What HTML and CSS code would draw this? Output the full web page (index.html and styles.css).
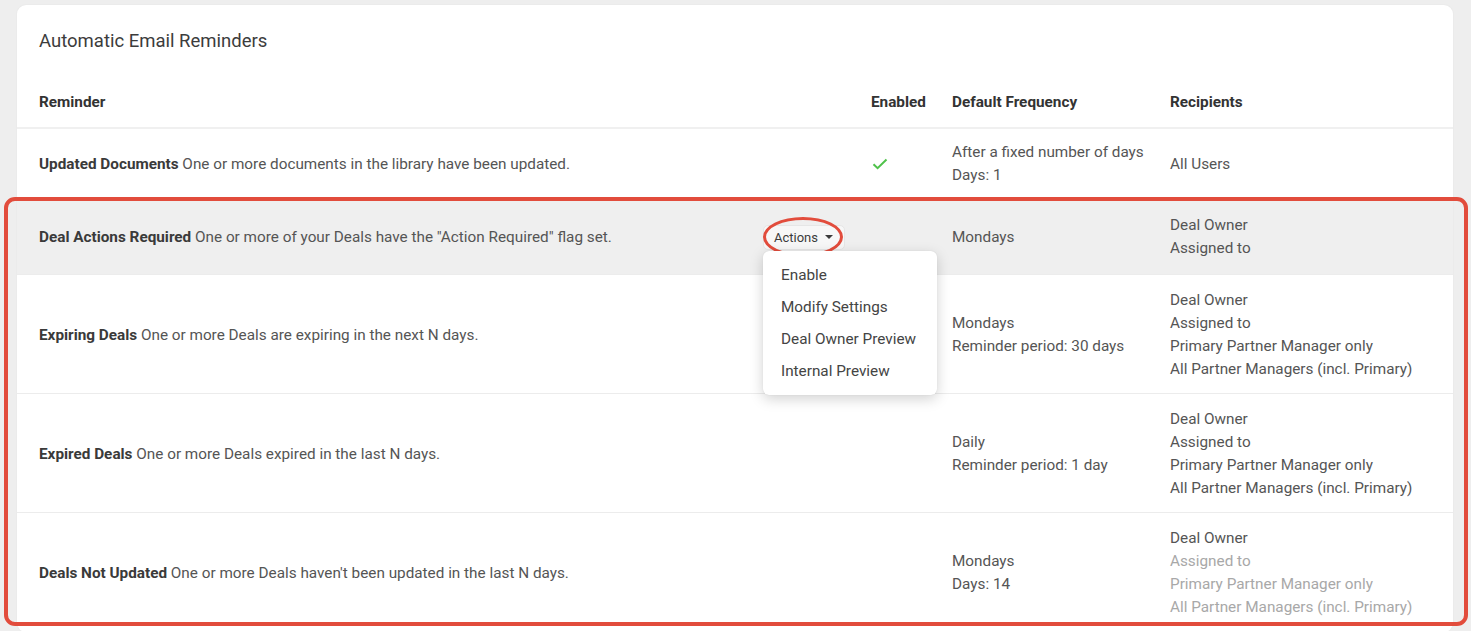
FILE: index.html
```html
<!DOCTYPE html>
<html lang="en">
<head>
<meta charset="utf-8">
<title>Automatic Email Reminders</title>
<link rel="stylesheet" href="styles.css">
</head>
<body>
<div class="page">
  <section class="card">
    <h2 class="card-title">Automatic Email Reminders</h2>
    <div class="grid head">
      <div class="cell c-rem">Reminder</div>
      <div class="cell c-en">Enabled</div>
      <div class="cell c-freq">Default Frequency</div>
      <div class="cell c-rec">Recipients</div>
    </div>

    <div class="grid row row-short">
      <div class="cell c-rem"><span><b>Updated Documents</b> One or more documents in the library have been updated.</span></div>
      <div class="cell c-en">
        <svg class="check" width="16" height="12" viewBox="0 0 16 12"><path d="M1.5 6.2 L5.6 10.2 L14.5 1.5" fill="none" stroke="#4fc24a" stroke-width="2"/></svg>
      </div>
      <div class="cell c-freq"><div>After a fixed number of days</div><div>Days: 1</div></div>
      <div class="cell c-rec"><div>All Users</div></div>
    </div>

    <div class="grid row row-hover">
      <div class="cell c-rem split">
        <span><b>Deal Actions Required</b> One or more of your Deals have the "Action Required" flag set.</span>
        <div class="actions">
          <button class="btn-actions">Actions <span class="caret"></span></button>
          <span class="ring"></span>
          <ul class="menu">
            <li>Enable</li>
            <li>Modify Settings</li>
            <li>Deal Owner Preview</li>
            <li>Internal Preview</li>
          </ul>
        </div>
      </div>
      <div class="cell c-en"></div>
      <div class="cell c-freq"><div>Mondays</div></div>
      <div class="cell c-rec"><div>Deal Owner</div><div>Assigned to</div></div>
    </div>

    <div class="grid row row-tall">
      <div class="cell c-rem"><span><b>Expiring Deals</b> One or more Deals are expiring in the next N days.</span></div>
      <div class="cell c-en"></div>
      <div class="cell c-freq"><div>Mondays</div><div>Reminder period: 30 days</div></div>
      <div class="cell c-rec"><div>Deal Owner</div><div>Assigned to</div><div>Primary Partner Manager only</div><div>All Partner Managers (incl. Primary)</div></div>
    </div>

    <div class="grid row row-tall">
      <div class="cell c-rem"><span><b>Expired Deals</b> One or more Deals expired in the last N days.</span></div>
      <div class="cell c-en"></div>
      <div class="cell c-freq"><div>Daily</div><div>Reminder period: 1 day</div></div>
      <div class="cell c-rec"><div>Deal Owner</div><div>Assigned to</div><div>Primary Partner Manager only</div><div>All Partner Managers (incl. Primary)</div></div>
    </div>

    <div class="grid row row-tall">
      <div class="cell c-rem"><span><b>Deals Not Updated</b> One or more Deals haven't been updated in the last N days.</span></div>
      <div class="cell c-en"></div>
      <div class="cell c-freq"><div>Mondays</div><div>Days: 14</div></div>
      <div class="cell c-rec"><div>Deal Owner</div><div class="muted">Assigned to</div><div class="muted">Primary Partner Manager only</div><div class="muted">All Partner Managers (incl. Primary)</div></div>
    </div>
  </section>
  <div class="highlight"></div>
</div>
</body>
</html>
```

FILE: styles.css
```css
html, body {
  margin: 0;
  padding: 0;
  background: #eeeeee;
  height: 100%;
  overflow: hidden;
}
body {
  font-family: Roboto, "Liberation Sans", Arial, sans-serif;
  font-size: 15.3px;
  color: #555555;
}
.page {
  position: relative;
  padding: 5px 18px 0 17px;
}
.card {
  background: #ffffff;
  border-radius: 9px;
  box-shadow: 0 0 2px rgba(0,0,0,0.06);
}
.card-title {
  margin: 0;
  padding: 24px 22px 0;
  font-size: 18.5px;
  line-height: 24px;
  font-weight: 400;
  color: #3c3c3c;
}
.grid {
  display: grid;
  grid-template-columns: 841px 81px 218px 1fr;
  align-items: center;
}
.cell {
  padding-left: 13px;
  line-height: 23px;
}
.cell.c-rem {
  padding-left: 22px;
  padding-right: 13px;
}
.head {
  margin-top: 38px;
  padding: 1px 0 15px;
  border-bottom: 2px solid #f0f0f0;
  font-weight: 700;
  color: #333333;
  line-height: 20px;
}
.head .cell { line-height: 20px; }
.row {
  border-bottom: 1px solid #ececec;
}
.row-short { padding: 12px 0 10px; }
.row-hover { padding: 16px 0 14px; background: #efefef; }
.row-tall { padding: 14px 0 12px; }
.row b {
  color: #3a3a3a;
  font-weight: 700;
}
.check { display: block; margin-left: 1px; }
.muted { color: #a8a8a8; }

.split {
  display: flex;
  justify-content: space-between;
  align-items: center;
}
.actions {
  position: relative;
}
.btn-actions {
  display: flex;
  align-items: center;
  height: 25px;
  width: 82px;
  padding: 0 0 0 10px;
  margin: 0;
  border: 1px solid #e6e6e6;
  border-radius: 5px;
  background: #f7f7f7;
  font-family: Roboto, "Liberation Sans", Arial, sans-serif;
  font-size: 13px;
  color: #3b3b3b;
  cursor: pointer;
}
.caret {
  display: inline-block;
  margin-left: 7px;
  width: 0;
  height: 0;
  border-left: 4px solid transparent;
  border-right: 4px solid transparent;
  border-top: 4px solid #3b3b3b;
}
.ring {
  position: absolute;
  left: 0;
  top: -8px;
  width: 74px;
  height: 34px;
  border: 3px solid #e24c3c;
  border-radius: 50%;
  pointer-events: none;
}
.menu {
  position: absolute;
  left: 0;
  top: 26px;
  width: 174px;
  margin: 0;
  padding: 8px 0 8px;
  list-style: none;
  background: #ffffff;
  border-radius: 6px;
  box-shadow: 0 4px 14px rgba(0,0,0,0.18), 0 0 1px rgba(0,0,0,0.15);
  z-index: 5;
}
.menu li {
  padding-left: 18px;
  line-height: 32px;
  height: 32px;
  color: #444444;
}
.highlight {
  position: absolute;
  left: 4px;
  top: 197px;
  width: 1456px;
  height: 421px;
  border: 4px solid #e24c3c;
  border-radius: 11px;
  pointer-events: none;
  z-index: 6;
}
```
